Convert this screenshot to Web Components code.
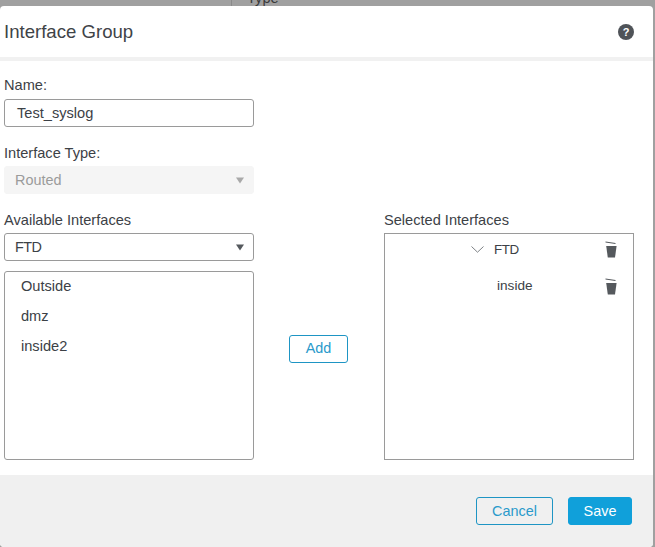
<!DOCTYPE html>
<html>
<head>
<meta charset="utf-8">
<title>Interface Group</title>
<style>
  html, body { margin: 0; height: 547px; overflow: hidden; background: #a0a0a0; }
  body { font-family: "Liberation Sans", Arial, sans-serif; color: #3c4146; }
</style>
</head>
<body>
<backdrop-strip></backdrop-strip>
<modal-dialog heading="Interface Group">
  <form-field label="Name:" gap="5">
    <text-box value="Test_syslog"></text-box>
  </form-field>
  <form-field label="Interface Type:" gap="4" top="18">
    <select-box value="Routed" disabled></select-box>
  </form-field>
  <transfer-pane top="18"></transfer-pane>
  <action-button slot="footer" kind="outline">Cancel</action-button>
  <action-button slot="footer" kind="primary">Save</action-button>
</modal-dialog>

<script>
const FONT = '"Liberation Sans", Arial, sans-serif';

class BackdropStrip extends HTMLElement {
  constructor() {
    super();
    this.attachShadow({ mode: 'open' }).innerHTML = `
      <style>
        :host { display: block; height: 6px; overflow: hidden; background: #a0a0a0; padding-left: 231px; }
        .cell { display: flex; height: 6px; border-left: 1px solid #8a8a8a; padding-left: 15px; }
        span { font: 14.6px/14px ${FONT}; color: #3a3a3a; margin-top: -9px; }
      </style>
      <div class="cell"><span>Type</span></div>`;
  }
}

class ModalDialog extends HTMLElement {
  static observedAttributes = ['heading'];
  constructor() {
    super();
    this.attachShadow({ mode: 'open' });
  }
  connectedCallback() { this.render(); }
  attributeChangedCallback() { this.render(); }
  render() {
    const heading = this.getAttribute('heading') || '';
    this.shadowRoot.innerHTML = `
      <style>
        :host {
          display: flex; flex-direction: column; height: 541px; width: 653px;
          box-sizing: border-box; background: #fff;
          border-radius: 4px; overflow: hidden;
        }
        header {
          display: flex; align-items: center; justify-content: space-between;
          height: 51px; padding: 0 19px 0 4px; flex: none;
        }
        h1 { margin: 0; font: 400 18.6px/24px ${FONT}; color: #3f4347; }
        .band { height: 4px; background: #f1f1f1; flex: none; }
        main { flex: 1; padding: 16px 0 0 4px; }
        footer {
          height: 72px; flex: none; background: #f0f0f0;
          display: flex; justify-content: flex-end; align-items: flex-start;
          gap: 15px; padding: 22px 21px 0 0; box-sizing: border-box;
        }
      </style>
      <header>
        <h1>${heading}</h1>
        <svg width="16" height="16" viewBox="0 0 16 16" aria-label="Help">
          <circle cx="8" cy="8" r="8" fill="#4f5358"/>
          <text x="8" y="12" text-anchor="middle" font-family="Liberation Sans" font-weight="700" font-size="11" fill="#fff">?</text>
        </svg>
      </header>
      <div class="band"></div>
      <main><slot></slot></main>
      <footer><slot name="footer"></slot></footer>`;
  }
}

class FormField extends HTMLElement {
  constructor() {
    super();
    const gap = this.getAttribute('gap') || '5';
    const top = this.getAttribute('top') || '0';
    this.attachShadow({ mode: 'open' }).innerHTML = `
      <style>
        :host { display: block; width: 250px; padding-top: ${top}px; }
        label { display: block; font: 14.6px/17px ${FONT}; color: #3c4146; margin-bottom: ${gap}px; }
      </style>
      <label>${this.getAttribute('label') || ''}</label>
      <slot></slot>`;
  }
}

class TextBox extends HTMLElement {
  constructor() {
    super();
    this.attachShadow({ mode: 'open' }).innerHTML = `
      <style>
        :host {
          display: block; height: 28px; box-sizing: border-box;
          border: 1px solid #9a9a9a; border-radius: 3px; background: #fff;
          padding-left: 12px; font: 14.6px/26px ${FONT}; color: #3c4146;
        }
      </style>
      ${this.getAttribute('value') || ''}`;
  }
}

class SelectBox extends HTMLElement {
  constructor() {
    super();
    const off = this.hasAttribute('disabled');
    this.attachShadow({ mode: 'open' }).innerHTML = `
      <style>
        :host {
          display: flex; align-items: center; justify-content: space-between;
          height: 28px; box-sizing: border-box; border-radius: 3px;
          padding: 0 9px 0 10px; font: 14.4px/17px ${FONT};
          ${off ? 'background: #f5f5f5; color: #9b9b9b; border: 1px solid #f5f5f5;'
                : 'background: #fff; color: #3c4146; border: 1px solid #9a9a9a; letter-spacing: -0.6px;'}
        }
        svg { fill: ${off ? '#a9a9a9' : '#55595d'}; }
      </style>
      <span>${this.getAttribute('value') || ''}</span>
      <svg width="8" height="7" viewBox="0 0 8 7"><path d="M0 0.5h8L4 6.5z"/></svg>`;
  }
}

class TrashIcon extends HTMLElement {
  constructor() {
    super();
    this.attachShadow({ mode: 'open' }).innerHTML = `
      <style>:host { display: block; width: 13px; height: 17px; line-height: 0; margin-top: 2px; }</style>
      <svg width="13" height="17" viewBox="0 0 13 17">
        <path d="M0.5 0.6 L10.5 2 L10.5 3 L0.5 1.6z" fill="#55595d"/>
        <path d="M1.2 5 H11.6 L10 16.6 H2.8z" fill="#55595d"/>
      </svg>`;
  }
}

class TransferPane extends HTMLElement {
  constructor() {
    super();
    this.attachShadow({ mode: 'open' }).innerHTML = `
      <style>
        :host {
          display: grid; grid-template-columns: 250px 130px 250px;
          padding-top: ${this.getAttribute('top') || 0}px; font: 14.6px/17px ${FONT};
        }
        .label { margin-bottom: 4px; color: #3c4146; }
        .box {
          box-sizing: border-box; border: 1px solid #9a9a9a; background: #fff;
        }
        .avail {
          height: 189px; margin-top: 10px; border-radius: 3px;
          padding: 6px 0 0 16px; display: flex; flex-direction: column; gap: 13px;
        }
        .mid { display: flex; align-items: center; padding-left: 35px; }
        .mid action-button { margin-top: 25px; }
        .sel { height: 227px; padding: 7px 15px 0 86px; display: flex; flex-direction: column; gap: 19px; }
        .row { display: flex; justify-content: space-between; align-items: center; height: 17px; }
        .row:first-child trash-icon { margin-top: 0; }
        .head { display: flex; align-items: center; gap: 10px; font-size: 13.4px; letter-spacing: -0.4px; }
        .child { padding-left: 26px; font-size: 13.6px; }
      </style>
      <div>
        <div class="label">Available Interfaces</div>
        <select-box value="FTD"></select-box>
        <div class="box avail">
          <div>Outside</div>
          <div>dmz</div>
          <div>inside2</div>
        </div>
      </div>
      <div class="mid"><action-button kind="outline" small>Add</action-button></div>
      <div>
        <div class="label">Selected Interfaces</div>
        <div class="box sel">
          <div class="row">
            <span class="head">
              <svg width="13" height="7" viewBox="0 0 13 7"><path d="M0.5 0.5L6.5 6.2L12.5 0.5" fill="none" stroke="#7d8185" stroke-width="1"/></svg>
              FTD
            </span>
            <trash-icon></trash-icon>
          </div>
          <div class="row">
            <span class="child">inside</span>
            <trash-icon></trash-icon>
          </div>
        </div>
      </div>`;
  }
}

class ActionButton extends HTMLElement {
  constructor() {
    super();
    const primary = this.getAttribute('kind') === 'primary';
    const small = this.hasAttribute('small');
    this.attachShadow({ mode: 'open' }).innerHTML = `
      <style>
        :host {
          display: inline-flex; align-items: center; justify-content: center;
          box-sizing: border-box; border-radius: 3px;
          width: ${small ? 59 : primary ? 64 : 77}px; height: 28px;
          font: 14.4px/17px ${FONT};
          border: 1px solid ${primary ? '#10a0da' : '#1e95c4'};
          background: ${primary ? '#10a0da' : 'transparent'};
          color: ${primary ? '#fff' : '#2a9acb'};
        }
      </style>
      <slot></slot>`;
  }
}

customElements.define('backdrop-strip', BackdropStrip);
customElements.define('modal-dialog', ModalDialog);
customElements.define('form-field', FormField);
customElements.define('text-box', TextBox);
customElements.define('select-box', SelectBox);
customElements.define('trash-icon', TrashIcon);
customElements.define('action-button', ActionButton);
customElements.define('transfer-pane', TransferPane);
</script>
</body>
</html>
